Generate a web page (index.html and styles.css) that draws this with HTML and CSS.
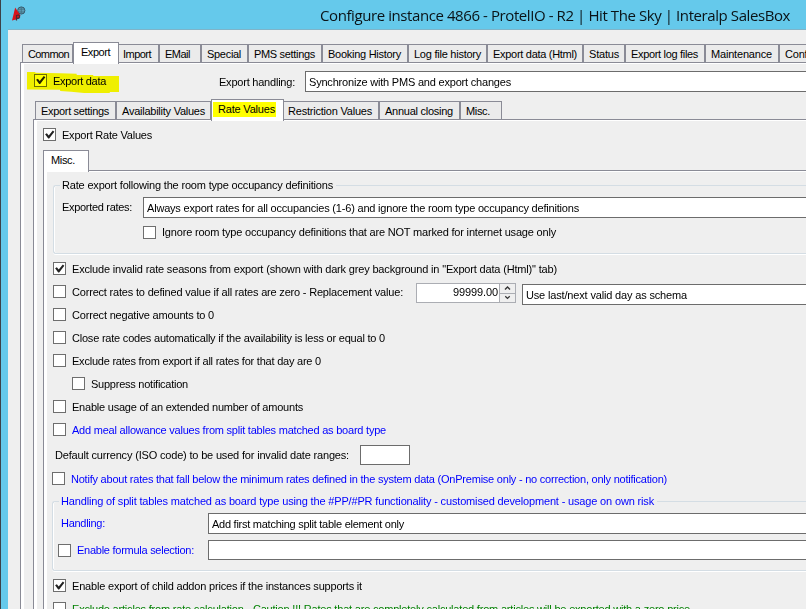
FILE: index.html
```html
<!DOCTYPE html>
<html lang="en">
<head>
<meta charset="utf-8">
<title>Configure instance 4866</title>
<link rel="stylesheet" href="styles.css">
</head>
<body>
<div class="window">
  <header class="titlebar">
    <svg class="app-icon" viewBox="0 0 14 16" width="14" height="16">
      <circle cx="9.300" cy="4.500" r="3.600" fill="#5c9db5" stroke="#37586a"/>
      <path d="M5.800 3.200h7M5.800 6h7M9.300 1v7" fill="none" stroke="#3f6a7d" stroke-width=".7"/>
      <path d="M3.200 1.500 L8.500 9.500 L6 13 L0 14.500 Z" fill="#d8131b"/>
      <path d="M4.500 14.500V9.500Q7.800 8 7.600 11Q7 13 4.500 12.300" fill="none" stroke="#4b2b33" stroke-width="1.200"/>
    </svg>
    <h1 class="title"><span data-w="470">Configure instance 4866 - ProtelIO - R2 | Hit The Sky | Interalp SalesBox</span></h1>
  </header>
  <main class="client">
    <nav class="tabs main-tabs">
      <div class="tab w51"><span data-w="41">Common</span></div>
      <div class="tab active w46"><span data-w="29">Export</span></div>
      <div class="tab w40 flush"><span data-w="28">Import</span></div>
      <div class="tab w42"><span data-w="25">EMail</span></div>
      <div class="tab w47"><span data-w="34">Special</span></div>
      <div class="tab w74"><span data-w="61">PMS settings</span></div>
      <div class="tab w86"><span data-w="73">Booking History</span></div>
      <div class="tab w79"><span data-w="67">Log file history</span></div>
      <div class="tab w96"><span data-w="84">Export data (Html)</span></div>
      <div class="tab w42"><span data-w="30">Status</span></div>
      <div class="tab w80"><span data-w="67">Export log files</span></div>
      <div class="tab w74"><span data-w="61">Maintenance</span></div>
      <div class="tab w74"><span data-w="63">Configuration</span></div>
    </nav>
    <section class="panel main-panel">
      <div class="row export-row">
        <label class="check marked"><i class="box on"></i><span data-w="53">Export data</span></label>
        <span class="caption"><span data-w="76">Export handling:</span></span>
        <div class="combo"><span data-w="202">Synchronize with PMS and export changes</span></div>
      </div>
      <nav class="tabs sub-tabs">
        <div class="tab w81"><span data-w="68">Export settings</span></div>
        <div class="tab w95"><span data-w="83">Availability Values</span></div>
        <div class="tab active w73"><span class="hl"><span data-w="57">Rate Values</span></span></div>
        <div class="tab w95 flush"><span data-w="84">Restriction Values</span></div>
        <div class="tab w81"><span data-w="68">Annual closing</span></div>
        <div class="tab w42"><span data-w="24">Misc.</span></div>
      </nav>
      <section class="panel sub-panel">
        <label class="check rates-check"><i class="box on"></i><span data-w="90">Export Rate Values</span></label>
        <nav class="tabs misc-tabs">
          <div class="tab active w46"><span data-w="24">Misc.</span></div>
        </nav>
        <section class="panel misc-panel">
          <fieldset class="group occupancy">
            <legend><span data-w="271">Rate export following the room type occupancy definitions</span></legend>
            <div class="row">
              <span class="caption"><span data-w="70">Exported rates:</span></span>
              <div class="combo"><span data-w="432">Always export rates for all occupancies (1-6) and ignore the room type occupancy definitions</span></div>
            </div>
            <label class="check"><i class="box"></i><span data-w="394">Ignore room type occupancy definitions that are NOT marked for internet usage only</span></label>
          </fieldset>
          <label class="check line"><i class="box on"></i><span data-w="485">Exclude invalid rate seasons from export (shown with dark grey background in "Export data (Html)" tab)</span></label>
          <div class="row line">
            <label class="check"><i class="box"></i><span data-w="331">Correct rates to defined value if all rates are zero - Replacement value:</span></label>
            <div class="spinner">
              <span class="value"><span data-w="45">99999.00</span></span>
              <div class="arrows">
                <svg viewBox="0 0 15 9" width="15" height="9"><path d="M5 5.500L7.500 3L10 5.500" fill="none" stroke="#333" stroke-width="1.400"/></svg>
                <svg viewBox="0 0 15 9" width="15" height="9"><path d="M5 2.500L7.500 5L10 2.500" fill="none" stroke="#333" stroke-width="1.400"/></svg>
              </div>
            </div>
            <div class="combo schema"><span data-w="161">Use last/next valid day as schema</span></div>
          </div>
          <label class="check line"><i class="box"></i><span data-w="142">Correct negative amounts to 0</span></label>
          <label class="check line"><i class="box"></i><span data-w="313">Close rate codes automatically if the availability is less or equal to 0</span></label>
          <label class="check line"><i class="box"></i><span data-w="249">Exclude rates from export if all rates for that day are 0</span></label>
          <label class="check line indent"><i class="box"></i><span data-w="97">Suppress notification</span></label>
          <label class="check line"><i class="box"></i><span data-w="231">Enable usage of an extended number of amounts</span></label>
          <label class="check line blue"><i class="box"></i><span data-w="314">Add meal allowance values from split tables matched as board type</span></label>
          <div class="row currency">
            <span class="caption"><span data-w="294">Default currency (ISO code) to be used for invalid date ranges:</span></span>
            <div class="input"></div>
          </div>
          <label class="check line blue outdent"><i class="box"></i><span data-w="596">Notify about rates that fall below the minimum rates defined in the system data (OnPremise only - no correction, only notification)</span></label>
          <fieldset class="group split blue">
            <legend><span data-w="593">Handling of split tables matched as board type using the #PP/#PR functionality - customised development - usage on own risk</span></legend>
            <div class="row">
              <span class="caption"><span data-w="44">Handling:</span></span>
              <div class="combo"><span data-w="192">Add first matching split table element only</span></div>
            </div>
            <div class="row formula">
              <label class="check"><i class="box"></i><span data-w="117">Enable formula selection:</span></label>
              <div class="input"></div>
            </div>
          </fieldset>
          <label class="check line"><i class="box on"></i><span data-w="290">Enable export of child addon prices if the instances supports it</span></label>
          <label class="check line green"><i class="box"></i><span data-w="618">Exclude articles from rate calculation - Caution !!! Rates that are completely calculated from articles will be exported with a zero price</span></label>
        </section>
      </section>
    </section>
  </main>
</div>
<script src="fit.js"></script>
</body>
</html>
```
FILE: styles.css
```css
* { box-sizing: border-box; }
html, body { margin: 0; width: 806px; height: 609px; overflow: hidden; }
body { font: 11px/14px "Liberation Sans", Arial, sans-serif; color: #000; white-space: nowrap; }

.window { width: 806px; height: 609px; overflow: hidden; background: #65c9eb; border-left: 1px solid #3c4148; display: flex; flex-direction: column; }
.titlebar { height: 29px; flex: none; display: flex; align-items: flex-start; padding: 6px 0 0 11px; }
.app-icon { flex: none; }
.title { margin: -1px 0 0 294px; font: 400 15px/20px "Open Sans", "Noto Sans", sans-serif; color: #0a1216; }
.client { flex: 1; min-height: 0; margin-left: 7px; background: #efefef; border-top: 1px solid #7fb4c8; padding: 12px 0 0 12px; overflow: hidden; }

.tabs { display: flex; align-items: flex-end; position: relative; height: 20px; padding-left: 2px; }
.tab { flex: none; height: 18px; border: 1px solid #8a8b96; border-bottom: 0; background: #ebebeb; padding: 2px 0 0 5px; }
.tab.active { height: 22px; margin-bottom: -2px; background: #fff; padding: 2px 0 0 7px; }
.tab.flush { border-left: 0; padding-left: 4px; }
.w40 { width: 40px; } .w42 { width: 42px; } .w46 { width: 46px; } .w47 { width: 47px; }
.w51 { width: 51px; } .w73 { width: 73px; } .w74 { width: 74px; } .w79 { width: 79px; }
.w80 { width: 80px; } .w81 { width: 81px; } .w86 { width: 86px; } .w95 { width: 95px; } .w96 { width: 96px; }

.panel { border-left: 1px solid #8a8b96; border-top: 1px solid #8a8b96; box-shadow: inset 3px 1px 0 #fff; }
.main-panel { height: 560px; padding: 8px 0 0 12px; }
.sub-panel { height: 500px; padding: 8px 0 0 9px; }
.misc-panel { height: 450px; padding: 7px 0 0 12px; }

.row { display: flex; }
.check { display: flex; align-items: center; gap: 6px; }
.box { flex: none; width: 13px; height: 13px; border: 1px solid #6e6e6e; background: #fff; }
.box.on::after { content: ""; display: block; width: 11px; height: 11px; background: #222; clip-path: polygon(10% 47%, 26% 38%, 43% 60%, 80% 13%, 94% 24%, 47% 87%, 38% 87%); }
.combo, .input { flex: 1; background: #fff; border: 1px solid #6c6c6c; border-right: 0; color: #000; }
.combo { height: 21px; padding: 3px 0 0 3px; }
.input { height: 20px; }

.export-row { height: 28px; }
.export-row .marked { position: relative; width: 185px; height: 21px; padding-left: 1px; }
.marked::after { content: ""; position: absolute; left: -6px; top: 1px; width: 92px; height: 21px; background: #ff0; mix-blend-mode: multiply; clip-path: polygon(0 0, 9% 0, 9% 4%, 36% 6%, 54% 8%, 54% 14%, 72% 14%, 72% 19%, 100% 19%, 100% 95%, 90% 95%, 90% 100%, 62% 100%, 48% 94%, 36% 90%, 36% 85%, 0 83%); }
.marked .box { margin-top: -3px; }
.marked > span { margin-top: -1px; }
.export-row .caption { width: 87px; padding: 4px 0 0 1px; }

.main-tabs, .sub-tabs, .misc-tabs { z-index: 1; }
.hl { display: inline-block; height: 15px; margin: 0 0 0 -6px; padding: 0 1px 0 5px; background: #ff0; line-height: 14px; }

.rates-check { height: 13px; margin-bottom: 9px; }
.misc-tabs { padding-left: 0; }

.group { min-width: 0; margin: 0; padding: 0; border: 1px solid #d4dde4; border-right: 0; border-radius: 3px 0 0 3px; box-shadow: inset 1px 0 0 #fff, 0 1px 0 #fff; }
.group legend { margin-left: 6px; padding: 0 3px 0 2px; height: 14px; }
.occupancy { height: 76px; margin-bottom: 3px; margin-left: -3px; }
.occupancy .row { margin-top: 5px; }
.occupancy .caption { width: 89px; padding: 3px 0 0 8px; }
.occupancy .check { margin: 7px 0 0 89px; }

.line { height: 23px; margin-left: -3px; }
.indent { margin-left: 16px; }
.outdent { margin-left: -4px; }
.row.line .check { width: 363px; height: 23px; margin-left: 0; }
.spinner { width: 100px; height: 20px; margin: 3px 6px 0 0; border: 1px solid #abadb3; background: #fff; display: flex; justify-content: flex-end; color: #000; }
.value { padding: 1px 1px 0 0; }
.arrows { width: 16px; height: 18px; border-left: 1px solid #abadb3; background: #efefef; }
.arrows svg { display: block; }
.arrows svg:last-child { border-top: 1px solid #abadb3; }
.schema { height: 21px; margin-top: 4px; }

.currency { height: 26px; padding-top: 4px; }
.currency .caption { width: 305px; margin-left: -1px; padding-top: 3px; }
.currency .input { flex: none; width: 50px; border-right: 1px solid #6c6c6c; }

.split { height: 77px; margin: 4px 0 3px -4px; }
.split .row { margin-top: 5px; }
.split .caption { width: 155px; padding: 3px 0 0 8px; }
.split .formula { margin-top: 6px; }
.formula .check { width: 155px; height: 20px; padding-left: 5px; }

.blue { color: #00f; }
.green { color: #008000; }
```
FILE: fit.js
```js
document.querySelectorAll('[data-w]').forEach(function (el) {
  var natural = el.getBoundingClientRect().width;
  el.style.letterSpacing = (Number(el.dataset.w) - natural) / el.textContent.length + 'px';
});
```
